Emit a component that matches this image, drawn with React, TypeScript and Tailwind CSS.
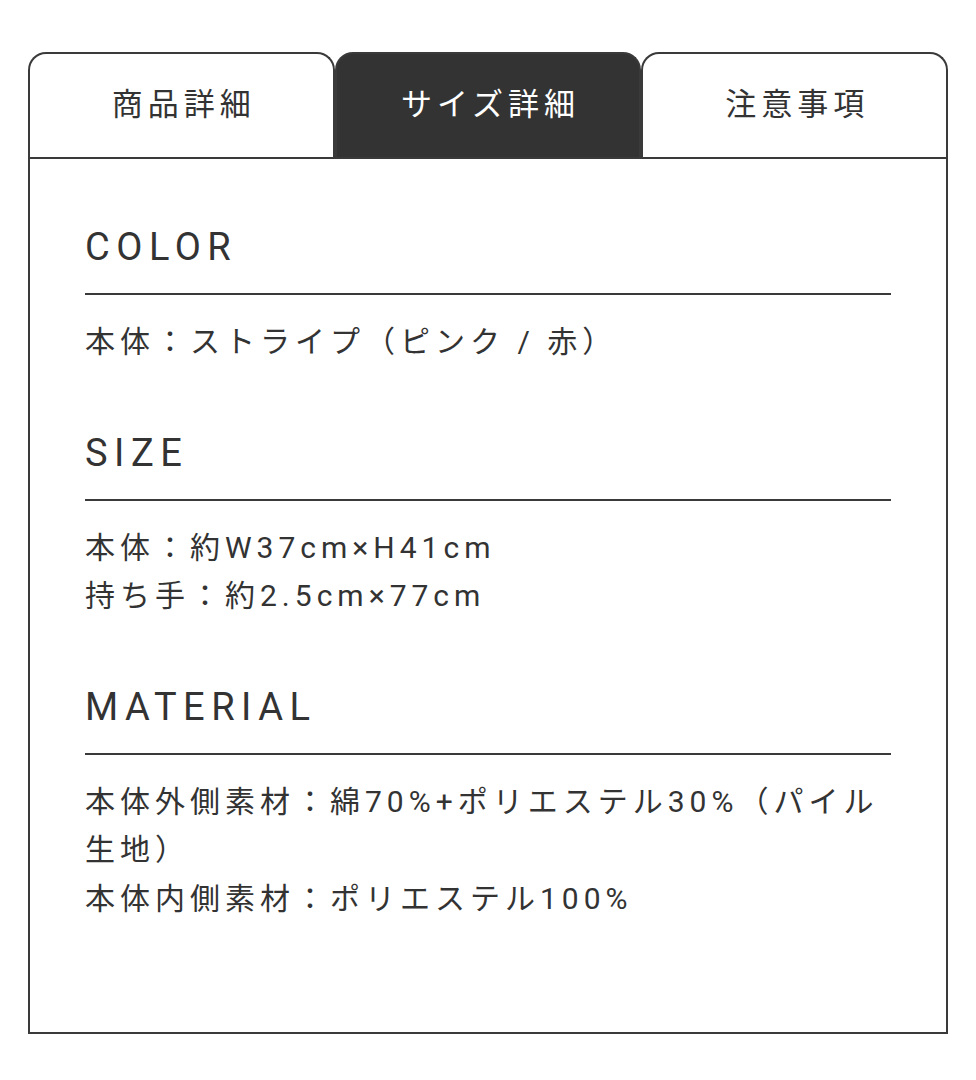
import { useState } from 'react';

const tabs = ['商品詳細', 'サイズ詳細', '注意事項'];

const sections = [
  { title: 'COLOR', lines: ['本体：ストライプ（ピンク / 赤）'] },
  { title: 'SIZE', lines: ['本体：約W37cm×H41cm', '持ち手：約2.5cm×77cm'] },
  {
    title: 'MATERIAL',
    lines: ['本体外側素材：綿70%+ポリエステル30%（パイル生地）', '本体内側素材：ポリエステル100%'],
  },
];

export default function App() {
  const [active, setActive] = useState(1);

  return (
    <main
      className="min-h-screen bg-white px-[28px] pt-[52px] text-[#333]"
      style={{ fontFamily: 'Roboto, "Noto Sans CJK JP", sans-serif' }}
    >
      {/* Tabs */}
      <div className="flex">
        {tabs.map((label, i) => (
          <button
            key={label}
            onClick={() => setActive(i)}
            className={`flex h-[105px] flex-1 items-center justify-center rounded-t-[18px] border-2 border-b-0 border-[#3a3a3a] pl-[5px] text-[31px] tracking-[5px] ${
              active === i ? 'bg-[#333] text-white' : 'bg-white text-[#333]'
            }`}
          >
            {label}
          </button>
        ))}
      </div>

      {/* Panel */}
      <div className="border-2 border-[#3a3a3a] px-[55px] pt-[60px] pb-[109px]">
        {sections.map((s, i) => (
          <section key={s.title} className={i > 0 ? 'mt-[58px]' : ''}>
            <h2 className="border-b-2 border-[#3a3a3a] pb-[17px] text-[38px] leading-[57px] tracking-[6.5px]">
              {s.title}
            </h2>
            <div className="mt-[23px] text-[30px] leading-[48.5px] tracking-[5px]">
              {s.lines.map((line) => (
                <p key={line}>{line}</p>
              ))}
            </div>
          </section>
        ))}
      </div>
    </main>
  );
}
